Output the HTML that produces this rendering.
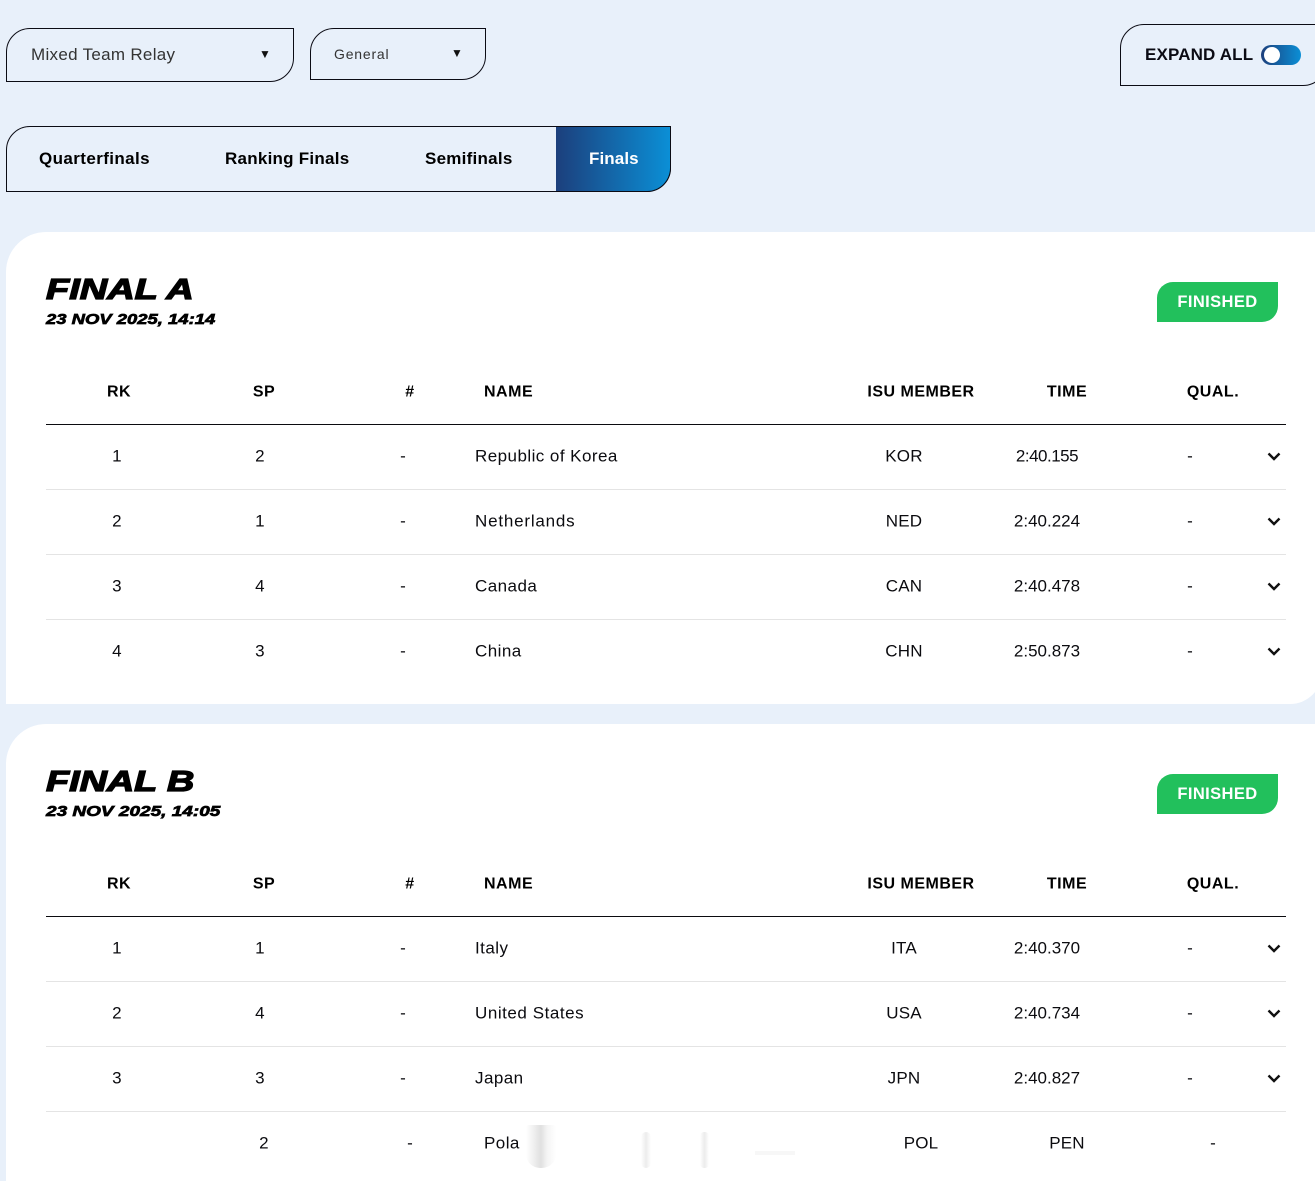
<!DOCTYPE html>
<html lang="en">
<head>
<meta charset="utf-8">
<title>Finals</title>
<style>
html,body{margin:0;padding:0;width:1315px;height:1181px;overflow:hidden;}
body{position:relative;background:#e8f0fa;font-family:"Liberation Sans",sans-serif;color:#0b0b0f;}
.a{position:absolute;white-space:nowrap;}
.box{position:absolute;box-sizing:border-box;border:1px solid #0b0b14;}
.c{position:absolute;white-space:nowrap;transform:translate(-50%,calc(-50% + .5px));font-size:17px;letter-spacing:.2px;line-height:20px;}
.l{position:absolute;white-space:nowrap;transform:translateY(calc(-50% + .5px));font-size:17px;letter-spacing:.45px;line-height:20px;}
.c.h{transform:translate(-50%,calc(-50% + 1.5px));}
.l.h{transform:translateY(calc(-50% + 1.5px));}
.h{font-size:16px;font-weight:bold;letter-spacing:.5px;color:#000;}
.t{letter-spacing:0;}
.card{position:absolute;left:6px;width:1316px;background:#fff;border-radius:40px 0 32px 0;}
.rule{position:absolute;left:46px;width:1240px;height:1px;background:#e4e4e4;}
.hr{position:absolute;left:46px;width:1240px;height:1px;background:#0b0b0f;}
.title{position:absolute;left:46px;font-weight:bold;font-style:italic;font-size:29px;line-height:30px;color:#000;-webkit-text-stroke:1.3px #000;transform-origin:0 0;white-space:nowrap;}
.date{position:absolute;left:46px;font-weight:bold;font-style:italic;font-size:15px;line-height:16px;color:#000;-webkit-text-stroke:.7px #000;transform-origin:0 0;white-space:nowrap;}
.badge{position:absolute;left:1157px;width:121px;height:40px;background:#22c05c;border-radius:16px 0 16px 0;color:#fff;font-weight:bold;font-size:16.5px;line-height:40px;text-align:center;letter-spacing:.4px;}
.chev{position:absolute;left:1267px;width:14px;height:9px;}
.arr{position:absolute;white-space:nowrap;transform:translate(-50%,-50%);font-size:12px;line-height:14px;color:#111;}
.tab{position:absolute;top:149px;font-size:17px;line-height:20px;font-weight:bold;color:#000;white-space:nowrap;}
</style>
</head>
<body>

<div class="box" style="left:6px;top:28px;width:288px;height:54px;border-radius:24px 0 24px 0;"></div>
<div class="a" style="left:31px;top:45px;font-size:17px;line-height:20px;letter-spacing:.3px;color:#333;">Mixed Team Relay</div>
<div class="arr" style="left:265px;top:54px;">▼</div>

<div class="box" style="left:310px;top:28px;width:176px;height:52px;border-radius:24px 0 24px 0;"></div>
<div class="a" style="left:334px;top:45px;font-size:14px;line-height:18px;letter-spacing:.8px;color:#333;">General</div>
<div class="arr" style="left:457px;top:53px;">▼</div>

<div class="box" style="left:1120px;top:24px;width:207px;height:62px;border-radius:24px 0 24px 0;"></div>
<div class="a" style="left:1145px;top:45px;font-size:17px;line-height:20px;font-weight:bold;letter-spacing:.15px;color:#0b0b14;">EXPAND ALL</div>
<div class="a" style="left:1261px;top:45px;width:40px;height:20px;border-radius:10px;background:linear-gradient(90deg,#1c3f7c,#0b8fd6);"></div>
<div class="a" style="left:1264px;top:47px;width:16px;height:16px;border-radius:50%;background:#fff;"></div>

<div class="box" style="left:6px;top:126px;width:665px;height:66px;border-radius:24px 0 24px 0;"></div>
<div class="a" style="left:556px;top:126px;width:115px;height:66px;box-sizing:border-box;background:linear-gradient(90deg,#1c3f7c,#0b8fd6);border-radius:0 0 24px 0;border-top:1px solid #0b0b14;border-right:1px solid #0b0b14;border-bottom:1px solid #0b0b14;"></div>
<div class="tab" style="left:39px;letter-spacing:.4px;">Quarterfinals</div>
<div class="tab" style="left:225px;letter-spacing:.25px;">Ranking Finals</div>
<div class="tab" style="left:425px;letter-spacing:.25px;">Semifinals</div>
<div class="tab" style="left:589px;letter-spacing:.1px;color:#fff;">Finals</div>

<div class="card" style="top:232px;height:472px;"></div>
<div class="card" style="top:724px;height:457px;border-radius:40px 0 0 0;"></div>

<!-- FINAL A -->
<div class="title" style="top:275px;transform:scaleX(1.31);">FINAL A</div>
<div class="date" style="top:312px;transform:scaleX(1.23);">23 NOV 2025, 14:14</div>
<div class="badge" style="top:282px;">FINISHED</div>

<div class="c h" style="left:119px;top:391px;">RK</div>
<div class="c h" style="left:264px;top:391px;">SP</div>
<div class="c h" style="left:410px;top:391px;">#</div>
<div class="l h" style="left:484px;top:391px;">NAME</div>
<div class="c h" style="left:921px;top:391px;">ISU MEMBER</div>
<div class="c h" style="left:1067px;top:391px;">TIME</div>
<div class="c h" style="left:1213px;top:391px;">QUAL.</div>
<div class="hr" style="top:424px;"></div>

<div class="c" style="left:117px;top:456px;">1</div><div class="c" style="left:260px;top:456px;">2</div><div class="c" style="left:403px;top:456px;">-</div><div class="l" style="left:475px;top:456px;">Republic of Korea</div><div class="c" style="left:904px;top:456px;">KOR</div><div class="c t" style="left:1047px;top:456px;letter-spacing:-.5px;">2:40.155</div><div class="c" style="left:1190px;top:456px;">-</div>
<svg class="chev" style="top:452px;" viewBox="0 0 14 9"><path d="M1.5 1.5L7 7L12.5 1.5" fill="none" stroke="#111" stroke-width="2.4"/></svg>
<div class="rule" style="top:489px;"></div>

<div class="c" style="left:117px;top:521px;">2</div><div class="c" style="left:260px;top:521px;">1</div><div class="c" style="left:403px;top:521px;">-</div><div class="l" style="left:475px;top:521px;letter-spacing:.8px;">Netherlands</div><div class="c" style="left:904px;top:521px;">NED</div><div class="c t" style="left:1047px;top:521px;">2:40.224</div><div class="c" style="left:1190px;top:521px;">-</div>
<svg class="chev" style="top:517px;" viewBox="0 0 14 9"><path d="M1.5 1.5L7 7L12.5 1.5" fill="none" stroke="#111" stroke-width="2.4"/></svg>
<div class="rule" style="top:554px;"></div>

<div class="c" style="left:117px;top:586px;">3</div><div class="c" style="left:260px;top:586px;">4</div><div class="c" style="left:403px;top:586px;">-</div><div class="l" style="left:475px;top:586px;">Canada</div><div class="c" style="left:904px;top:586px;">CAN</div><div class="c t" style="left:1047px;top:586px;">2:40.478</div><div class="c" style="left:1190px;top:586px;">-</div>
<svg class="chev" style="top:582px;" viewBox="0 0 14 9"><path d="M1.5 1.5L7 7L12.5 1.5" fill="none" stroke="#111" stroke-width="2.4"/></svg>
<div class="rule" style="top:619px;"></div>

<div class="c" style="left:117px;top:651px;">4</div><div class="c" style="left:260px;top:651px;">3</div><div class="c" style="left:403px;top:651px;">-</div><div class="l" style="left:475px;top:651px;">China</div><div class="c" style="left:904px;top:651px;">CHN</div><div class="c t" style="left:1047px;top:651px;">2:50.873</div><div class="c" style="left:1190px;top:651px;">-</div>
<svg class="chev" style="top:647px;" viewBox="0 0 14 9"><path d="M1.5 1.5L7 7L12.5 1.5" fill="none" stroke="#111" stroke-width="2.4"/></svg>

<!-- FINAL B -->
<div class="title" style="top:767px;transform:scaleX(1.303);">FINAL B</div>
<div class="date" style="top:804px;transform:scaleX(1.267);">23 NOV 2025, 14:05</div>
<div class="badge" style="top:774px;">FINISHED</div>

<div class="c h" style="left:119px;top:883px;">RK</div>
<div class="c h" style="left:264px;top:883px;">SP</div>
<div class="c h" style="left:410px;top:883px;">#</div>
<div class="l h" style="left:484px;top:883px;">NAME</div>
<div class="c h" style="left:921px;top:883px;">ISU MEMBER</div>
<div class="c h" style="left:1067px;top:883px;">TIME</div>
<div class="c h" style="left:1213px;top:883px;">QUAL.</div>
<div class="hr" style="top:916px;"></div>

<div class="c" style="left:117px;top:948px;">1</div><div class="c" style="left:260px;top:948px;">1</div><div class="c" style="left:403px;top:948px;">-</div><div class="l" style="left:475px;top:948px;">Italy</div><div class="c" style="left:904px;top:948px;">ITA</div><div class="c t" style="left:1047px;top:948px;">2:40.370</div><div class="c" style="left:1190px;top:948px;">-</div>
<svg class="chev" style="top:944px;" viewBox="0 0 14 9"><path d="M1.5 1.5L7 7L12.5 1.5" fill="none" stroke="#111" stroke-width="2.4"/></svg>
<div class="rule" style="top:981px;"></div>

<div class="c" style="left:117px;top:1013px;">2</div><div class="c" style="left:260px;top:1013px;">4</div><div class="c" style="left:403px;top:1013px;">-</div><div class="l" style="left:475px;top:1013px;letter-spacing:.55px;">United States</div><div class="c" style="left:904px;top:1013px;">USA</div><div class="c t" style="left:1047px;top:1013px;">2:40.734</div><div class="c" style="left:1190px;top:1013px;">-</div>
<svg class="chev" style="top:1009px;" viewBox="0 0 14 9"><path d="M1.5 1.5L7 7L12.5 1.5" fill="none" stroke="#111" stroke-width="2.4"/></svg>
<div class="rule" style="top:1046px;"></div>

<div class="c" style="left:117px;top:1078px;">3</div><div class="c" style="left:260px;top:1078px;">3</div><div class="c" style="left:403px;top:1078px;">-</div><div class="l" style="left:475px;top:1078px;">Japan</div><div class="c" style="left:904px;top:1078px;">JPN</div><div class="c t" style="left:1047px;top:1078px;">2:40.827</div><div class="c" style="left:1190px;top:1078px;">-</div>
<svg class="chev" style="top:1074px;" viewBox="0 0 14 9"><path d="M1.5 1.5L7 7L12.5 1.5" fill="none" stroke="#111" stroke-width="2.4"/></svg>
<div class="rule" style="top:1111px;"></div>

<div class="c" style="left:264px;top:1143px;">2</div><div class="c" style="left:410px;top:1143px;">-</div><div class="l" style="left:484px;top:1143px;">Pola</div><div class="c" style="left:921px;top:1143px;">POL</div><div class="c" style="left:1067px;top:1143px;">PEN</div><div class="c" style="left:1213px;top:1143px;">-</div>

<div class="a" style="left:526px;top:1125px;width:30px;height:43px;border-radius:3px 3px 14px 14px;background:linear-gradient(90deg,#fff,#e0e0e0 50%,#f4f4f4 70%,#fff);"></div>
<div class="a" style="left:641px;top:1132px;width:10px;height:36px;border-radius:5px;background:linear-gradient(90deg,#fff,#ececec,#fff);"></div>
<div class="a" style="left:700px;top:1132px;width:9px;height:36px;border-radius:4px;background:linear-gradient(90deg,#fff,#ececec,#fff);"></div>
<div class="a" style="left:755px;top:1151px;width:40px;height:4px;background:#f7f7f7;"></div>

</body>
</html>
